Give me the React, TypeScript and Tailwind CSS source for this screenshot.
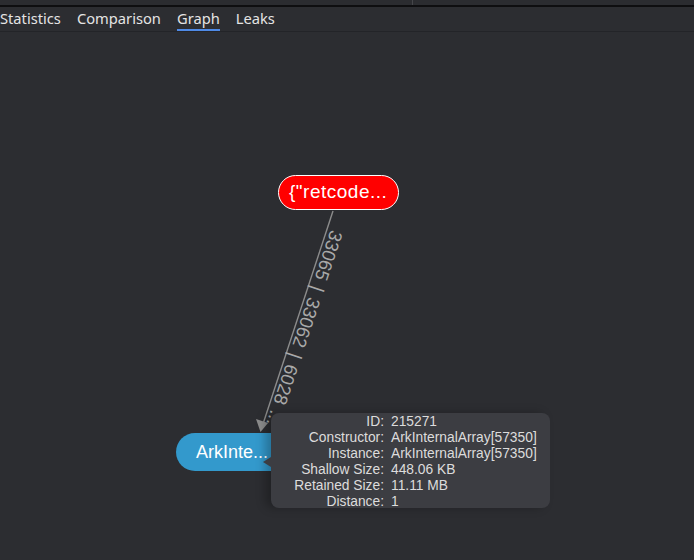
import React from 'react';

const tabs = ['Statistics', 'Comparison', 'Graph', 'Leaks'];

const details: [string, string][] = [
  ['ID', '215271'],
  ['Constructor', 'ArkInternalArray[57350]'],
  ['Instance', 'ArkInternalArray[57350]'],
  ['Shallow Size', '448.06 KB'],
  ['Retained Size', '11.11 MB'],
  ['Distance', '1'],
];

function TabBar() {
  return (
    <div className="flex h-[25px] items-stretch gap-4 border-b border-[#232428] pl-0 text-[14.7px] text-[#e4e4e4] [font-family:'Noto_Sans',sans-serif]">
      {tabs.map((t) => (
        <div key={t} className="relative flex items-center leading-none">
          <span className="-mt-[1px]">{t}</span>
          {t === 'Graph' && <div className="absolute bottom-0 left-0 right-0 h-[2px] bg-[#4f8ae6]" />}
        </div>
      ))}
    </div>
  );
}

function Edge() {
  // from the red node down to the blue one
  return (
    <svg className="absolute inset-0" width="694" height="528">
      <line x1="333" y1="179" x2="263" y2="392" stroke="#8c8c8c" strokeWidth="1.4" />
      <polygon points="260.5,400 256,387 268,391" fill="#8c8c8c" />
      <g transform="translate(327,196) rotate(108.4)">
        <text x="0" y="-4" fill="#a9a9a9" fontSize="18.5" wordSpacing="2" fontFamily="'Liberation Sans', Arial, sans-serif">
          33065 | 33062 | 6028 ...
        </text>
      </g>
    </svg>
  );
}

function Tooltip() {
  return (
    <div className="absolute left-[271px] top-[381px] h-[95px] w-[279px] rounded-[8px] bg-[#3c3d42] pt-[1px] text-[13.8px] leading-[16px] text-[#dcdcdc] shadow-[-6px_0_10px_rgba(0,0,0,0.25)] [font-family:'Liberation_Sans',Arial,sans-serif]">
      <div className="absolute -left-[8px] top-[44px] h-0 w-0 border-y-[5px] border-r-[8px] border-y-transparent border-r-[#3c3d42]" />
      <div className="grid grid-cols-[113px_1fr] gap-x-[7px]">
        {details.map(([k, v]) => (
          <React.Fragment key={k}>
            <span className="text-right whitespace-nowrap">{k}:</span>
            <span className="whitespace-nowrap">{v}</span>
          </React.Fragment>
        ))}
      </div>
    </div>
  );
}

export default function App() {
  return (
    <div className="flex h-[560px] w-[694px] flex-col overflow-hidden bg-[#2c2d31]">
      <div className="flex h-[5px] bg-[#2b2c30]">
        <div className="w-[413px] border-r border-[#45464a]" />
      </div>
      <div className="h-[2px] bg-[#0e0e10]" />
      <TabBar />
      <div className="relative flex-1">
        <Edge />
        <div className="absolute left-[278px] top-[143px] flex h-[35px] w-[121px] items-center rounded-full border-[1.5px] border-white bg-[#ff0000] pl-[10px] text-[19px] tracking-[0.5px] text-white [font-family:'Liberation_Sans',Arial,sans-serif]">
          {'{"retcode...'}
        </div>
        <div className="absolute left-[176px] top-[401px] flex h-[38px] w-[124px] items-center rounded-full bg-[#3399cc] pl-[20px] text-[18px] text-white [font-family:'Liberation_Sans',Arial,sans-serif]">
          ArkInte...
        </div>
        <Tooltip />
      </div>
    </div>
  );
}
